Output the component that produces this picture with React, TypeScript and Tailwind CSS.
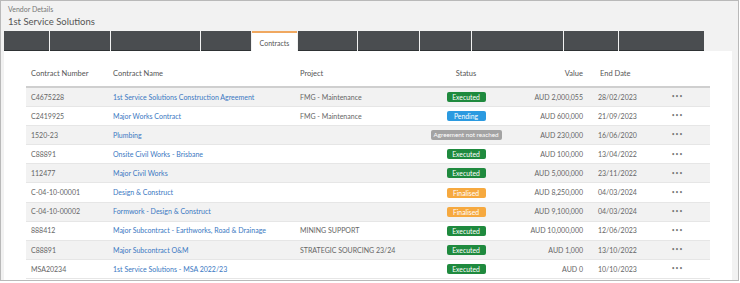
import React from 'react';

type Status = 'Executed' | 'Pending' | 'Agreement not reached' | 'Finalised';

interface Contract {
  number: string;
  name: string;
  project: string;
  status: Status;
  value: string;
  endDate: string;
}

const contracts: Contract[] = [
  { number: 'C4675228', name: '1st Service Solutions Construction Agreement', project: 'FMG - Maintenance', status: 'Executed', value: 'AUD 2,000,055', endDate: '28/02/2023' },
  { number: 'C2419925', name: 'Major Works Contract', project: 'FMG - Maintenance', status: 'Pending', value: 'AUD 600,000', endDate: '21/09/2023' },
  { number: '1520-23', name: 'Plumbing', project: '', status: 'Agreement not reached', value: 'AUD 230,000', endDate: '16/06/2020' },
  { number: 'C88891', name: 'Onsite Civil Works - Brisbane', project: '', status: 'Executed', value: 'AUD 100,000', endDate: '13/04/2022' },
  { number: '112477', name: 'Major Civil Works', project: '', status: 'Executed', value: 'AUD 5,000,000', endDate: '23/11/2022' },
  { number: 'C-04-10-00001', name: 'Design & Construct', project: '', status: 'Finalised', value: 'AUD 8,250,000', endDate: '04/03/2024' },
  { number: 'C-04-10-00002', name: 'Formwork - Design & Construct', project: '', status: 'Finalised', value: 'AUD 9,100,000', endDate: '04/03/2024' },
  { number: '888412', name: 'Major Subcontract - Earthworks, Road & Drainage', project: 'MINING SUPPORT', status: 'Executed', value: 'AUD 10,000,000', endDate: '12/06/2023' },
  { number: 'C88891', name: 'Major Subcontract O&M', project: 'STRATEGIC SOURCING 23/24', status: 'Executed', value: 'AUD 1,000', endDate: '13/10/2022' },
  { number: 'MSA20234', name: '1st Service Solutions - MSA 2022/23', project: '', status: 'Executed', value: 'AUD 0', endDate: '10/10/2023' },
];

// tab widths measured off the page; index 4 is the active one
const tabs = [45, 60, 89, 50, 45, 59, 61, 51, 91, 54, 85];

const badgeClass: Record<Status, string> = {
  Executed: 'bg-[#1f8a3e] w-[39px] text-[6.8px]',
  Pending: 'bg-[#2b9ae0] w-[39px] text-[6.8px]',
  'Agreement not reached': 'bg-[#a3a3a3] w-[71px] text-[6.3px]',
  Finalised: 'bg-[#f6a93f] w-[39px] text-[6.8px]',
};

const cols = 'grid grid-cols-[82px_187px_125px_92px_81px_52px_65px]';

const App: React.FC = () => {
  return (
    <div className="w-[740px] h-[283px] bg-white font-['Lato',sans-serif]">
      <div className="w-[739px] h-[281px] border border-[#b9b9b9] bg-[#f2f2f2] pl-[3px] pr-[6px] flex flex-col overflow-hidden">
        {/* Header */}
        <div className="pl-[4px] pt-[4px] h-[30px]">
          <div className="text-[7px] leading-[9px] text-[#777]">Vendor Details</div>
          <div className="text-[9.5px] leading-[13px] text-[#555] mt-[1px]">1st Service Solutions</div>
        </div>

        {/* Tabs */}
        <div className="flex gap-[1px] h-[20px]">
          {tabs.map((w, i) =>
            i === 4 ? (
              <div
                key={i}
                style={{ width: w }}
                className="bg-white border-t-2 border-[#f0a860] flex items-center justify-center pt-[2px] text-[7px] text-[#555]"
              >
                Contracts
              </div>
            ) : (
              <div key={i} style={{ width: w }} className="bg-[#4a4d50] border-b border-[#2e3234]" />
            )
          )}
        </div>

        {/* Panel */}
        <div className="flex-1 bg-white pl-[22px] pt-[7px] overflow-hidden">
          <div className="w-[684px]">
            <div className={`${cols} h-[30px] items-center pt-[3px] border-b-2 border-[#cfcfcf] text-[7.5px] text-[#555]`}>
              <div className="pl-[5px]">Contract Number</div>
              <div className="pl-[5px]">Contract Name</div>
              <div className="pl-[5px]">Project</div>
              <div className="text-center">Status</div>
              <div className="text-right pr-[10px]">Value</div>
              <div className="pl-[7px]">End Date</div>
              <div />
            </div>
            {contracts.map((c, i) => (
              <div
                key={i}
                className={`${cols} h-[19.1px] items-center border-b border-[#e6e6e6] text-[7px] text-[#666] ${i % 2 === 0 ? 'bg-[#f2f2f2]' : 'bg-white'}`}
              >
                <div className="pl-[5px]">{c.number}</div>
                <div className="pl-[5px] text-[#3a78c2]">{c.name}</div>
                <div className="pl-[5px]">{c.project}</div>
                <div className="flex justify-center">
                  <span className={`${badgeClass[c.status]} h-[10px] rounded-[2px] text-white leading-[10px] text-center whitespace-nowrap`}>
                    {c.status}
                  </span>
                </div>
                <div className="text-right pr-[10px]">{c.value}</div>
                <div className="pl-[5px]">{c.endDate}</div>
                <div className="text-center text-[#777] text-[5px] tracking-[1px]">•••</div>
              </div>
            ))}
          </div>
        </div>
      </div>
    </div>
  );
};

export default App;
